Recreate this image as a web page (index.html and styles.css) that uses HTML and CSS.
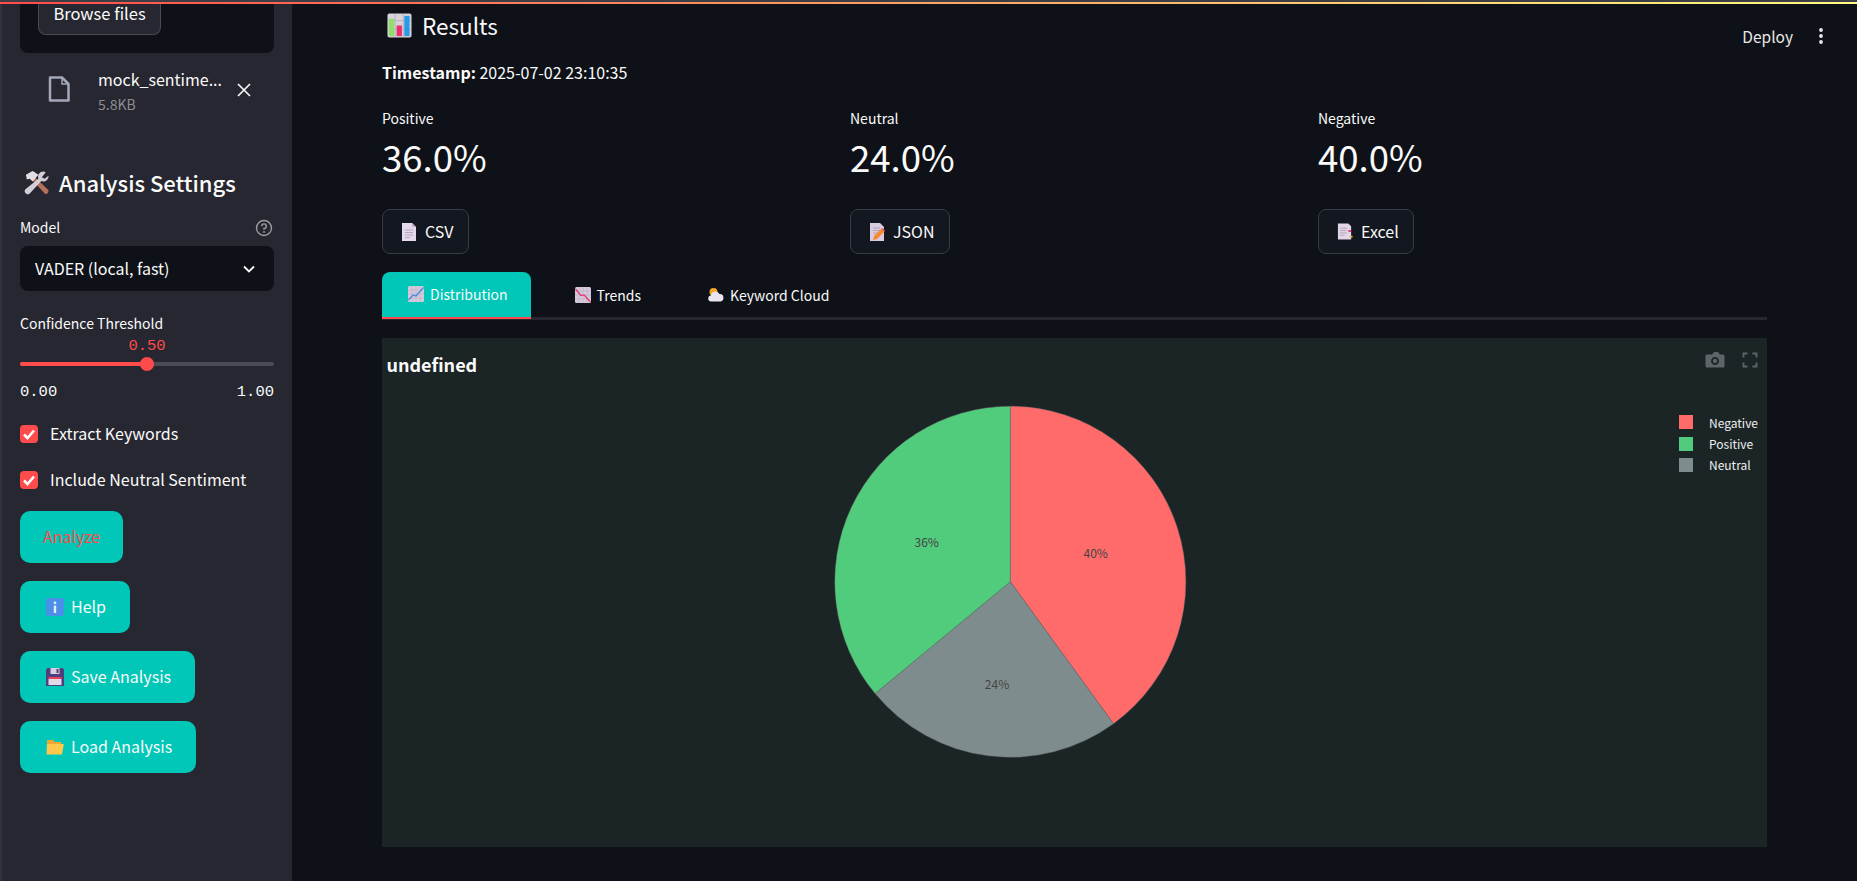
FILE: index.html
```html
<!DOCTYPE html>
<html lang="en">
<head>
  <meta charset="UTF-8" />
  <meta name="viewport" content="width=device-width, initial-scale=1.0" />
  <title>Sentiment Dashboard</title>
  <link rel="stylesheet" href="styles.css">
</head>
<body>
  <svg class="icon-defs" width="0" height="0">
    <symbol id="e-tools" viewBox="0 0 26 26">
      <path d="M22 25 L8 10 L11 7 L25.500 21 Q25.500 25 22 25Z" fill="#b5705a"/>
      <path d="M2 5 L9 1 L15 5 L9 12 L6 9 L3 10Z" fill="#e4dfe6"/>
      <path d="M20 1.500 A5.500 5.500 0 0 0 15 9 L1.500 20 A3.200 3.200 0 0 0 6 24.500 L18 11.500 A5.500 5.500 0 0 0 25.500 6 L21.500 9 L18.500 7.500 L22.500 2.500 Q21.500 1.500 20 1.500Z" fill="#d2cfd8"/>
    </symbol>
    <symbol id="e-chart" viewBox="0 0 26 26">
      <rect x="0.500" y="0.500" width="25" height="25" rx="2" fill="#d8d2da"/>
      <path d="M8.500 1V25M17 1V25M1 8H25M1 17H25" stroke="#b9b3bc" stroke-width="1"/>
      <rect x="2" y="6" width="5.500" height="18" fill="#8fe06a"/>
      <rect x="10" y="13" width="5.500" height="11" fill="#e8316e"/>
      <rect x="18" y="3" width="5.500" height="21" fill="#2a9ae8"/>
    </symbol>
    <symbol id="e-page" viewBox="0 0 16 20">
      <path d="M1 1H11L15 5V19H1Z" fill="#e6d8ec"/>
      <path d="M11 1L15 5H11Z" fill="#bfb0c8"/>
      <path d="M4 8H12M4 10.500H12M4 13H12M4 15.500H9" stroke="#a99bb0" stroke-width="0.800"/>
    </symbol>
    <symbol id="e-memo" viewBox="0 0 16 20">
      <path d="M1 1H11L15 5V19H1Z" fill="#d9cbe0"/>
      <path d="M4 6H11M4 8.500H12M4 11H9" stroke="#a99bb0" stroke-width="0.800"/>
      <path d="M4 18L5 14L12 7L15 10L8 17Z" fill="#f58a2e"/>
      <path d="M12 7L14 6L16 9L15 10Z" fill="#f0584e"/>
    </symbol>
    <symbol id="e-tabs" viewBox="0 0 17 20">
      <path d="M1 1H12L15 4V18H1Z" fill="#e2d6e8"/>
      <path d="M3 6H11M3 8.500H10M3 11H11M3 13.500H8" stroke="#a99bb0" stroke-width="0.800"/>
      <rect x="12" y="8" width="3" height="2" fill="#e8406a"/>
      <rect x="14" y="14" width="2.500" height="2" fill="#f2a93b"/>
    </symbol>
    <symbol id="e-up" viewBox="0 0 16 16">
      <rect width="16" height="16" rx="1.500" fill="#d5c9dc"/>
      <path d="M4 0V16M8 0V16M12 0V16M0 4H16M0 8H16M0 12H16" stroke="#b8abc1" stroke-width="0.500"/>
      <path d="M0.500 14L5 9L8 10L15.500 1.500" fill="none" stroke="#3f8be0" stroke-width="1.200"/>
    </symbol>
    <symbol id="e-down" viewBox="0 0 16 16">
      <rect width="16" height="16" rx="1.500" fill="#d5c9dc"/>
      <path d="M4 0V16M8 0V16M12 0V16M0 4H16M0 8H16M0 12H16" stroke="#b8abc1" stroke-width="0.500"/>
      <path d="M0.500 2L6 8.500L9 8L15.500 15" fill="none" stroke="#e8356e" stroke-width="1.200"/>
    </symbol>
    <symbol id="e-cloud" viewBox="0 0 16 16">
      <circle cx="5.500" cy="5" r="4" fill="#f5a623"/>
      <path d="M3.500 14.500A3 3 0 0 1 3 8.500A4.500 4.500 0 0 1 11.500 7A3.800 3.800 0 0 1 12.500 14.500Z" fill="#e9e6f2"/>
    </symbol>
    <symbol id="e-info" viewBox="0 0 18 18">
      <rect width="18" height="18" rx="2.500" fill="#4a8fe8"/>
      <rect x="7.800" y="7.500" width="2.400" height="7.500" fill="#e4ecfb"/>
      <circle cx="9" cy="4.800" r="1.400" fill="#e4ecfb"/>
    </symbol>
    <symbol id="e-floppy" viewBox="0 0 18 18">
      <path d="M1.500 0H16.500L18 1.500V18H0V1.500Z" fill="#4f3f7e"/>
      <rect x="4.500" y="0" width="9" height="6" fill="#d6d0e2"/>
      <rect x="10.500" y="1" width="2" height="4" fill="#4f3f7e"/>
      <rect x="2.500" y="9" width="13" height="2" fill="#e8405a"/>
      <rect x="2.500" y="11" width="13" height="6" fill="#e2d8ea"/>
    </symbol>
    <symbol id="e-folder" viewBox="0 0 18 16">
      <path d="M1 1H7L9 3H15V7H1Z" fill="#f0a92e"/>
      <path d="M0.500 15.500L1 5H17.800L16 15.500Z" fill="#ffc84a"/>
    </symbol>
  </svg>

  <div class="top-line"></div>

  <aside class="sidebar">
    <div class="uploader">
      <button class="browse-btn">Browse files</button>
    </div>

    <div class="file-row">
      <svg class="file-icon" viewBox="0 0 22 26"><path d="M2 1.500H14L20.500 8V24.500H2Z" fill="none" stroke="#a3a8b8" stroke-width="2.500" stroke-linejoin="round"/><path d="M14 1.500V8H20.500" fill="none" stroke="#a3a8b8" stroke-width="1.500"/></svg>
      <div class="file-text">
        <div class="file-name">mock_sentime...</div>
        <div class="file-size">5.8KB</div>
      </div>
      <svg class="file-close" viewBox="0 0 14 14"><path d="M1 1L13 13M13 1L1 13" stroke="#fafafa" stroke-width="1.600"/></svg>
    </div>

    <h3 class="side-title"><svg class="emoji-lg"><use href="#e-tools"/></svg>Analysis Settings</h3>

    <div class="field-label">
      <span>Model</span>
      <svg class="help-icon" viewBox="0 0 18 18"><circle cx="9" cy="9" r="7.500" fill="none" stroke="#9a9ba2" stroke-width="1.400"/><path d="M6.700 7.200A2.300 2.300 0 1 1 9 9.500V10.700" fill="none" stroke="#9a9ba2" stroke-width="1.400"/><circle cx="9" cy="13" r="0.900" fill="#9a9ba2"/></svg>
    </div>
    <div class="select-box">
      <span>VADER (local, fast)</span>
      <svg class="chevron" viewBox="0 0 12 8"><path d="M1 1.500L6 6.500L11 1.500" fill="none" stroke="#fafafa" stroke-width="1.800"/></svg>
    </div>

    <div class="slider-label">Confidence Threshold</div>
    <div class="slider-value">0.50</div>
    <div class="slider-track"><div class="slider-fill"></div><div class="slider-thumb"></div></div>
    <div class="slider-ticks"><span>0.00</span><span>1.00</span></div>

    <label class="check-row"><span class="check-box"><svg viewBox="0 0 18 18"><path d="M4 9.500L7.500 13L14 5.500" fill="none" stroke="#fff" stroke-width="2.600"/></svg></span>Extract Keywords</label>
    <label class="check-row"><span class="check-box"><svg viewBox="0 0 18 18"><path d="M4 9.500L7.500 13L14 5.500" fill="none" stroke="#fff" stroke-width="2.600"/></svg></span>Include Neutral Sentiment</label>

    <div class="side-buttons">
      <button class="teal-btn analyze">Analyze</button>
      <button class="teal-btn"><svg class="emoji-btn"><use href="#e-info"/></svg>Help</button>
      <button class="teal-btn"><svg class="emoji-btn"><use href="#e-floppy"/></svg>Save Analysis</button>
      <button class="teal-btn"><svg class="emoji-btn"><use href="#e-folder"/></svg>Load Analysis</button>
    </div>
  </aside>

  <main class="main">
    <div class="app-header">
      <span>Deploy</span>
      <svg class="kebab" viewBox="0 0 6 18"><circle cx="3" cy="3" r="1.900"/><circle cx="3" cy="9" r="1.900"/><circle cx="3" cy="15" r="1.900"/></svg>
    </div>

    <h3 class="results-title"><svg class="emoji-lg"><use href="#e-chart"/></svg>Results</h3>
    <p class="timestamp"><strong>Timestamp:</strong> 2025-07-02 23:10:35</p>

    <div class="metrics">
      <div class="metric">
        <div class="metric-label">Positive</div>
        <div class="metric-value">36.0%</div>
        <button class="dl-btn"><svg class="emoji-dl"><use href="#e-page"/></svg>CSV</button>
      </div>
      <div class="metric">
        <div class="metric-label">Neutral</div>
        <div class="metric-value">24.0%</div>
        <button class="dl-btn"><svg class="emoji-dl"><use href="#e-memo"/></svg>JSON</button>
      </div>
      <div class="metric">
        <div class="metric-label">Negative</div>
        <div class="metric-value">40.0%</div>
        <button class="dl-btn"><svg class="emoji-dl"><use href="#e-tabs"/></svg>Excel</button>
      </div>
    </div>

    <div class="tabs">
      <div class="tab active"><svg class="emoji-tab"><use href="#e-up"/></svg>Distribution</div>
      <div class="tab"><svg class="emoji-tab"><use href="#e-down"/></svg>Trends</div>
      <div class="tab"><svg class="emoji-tab"><use href="#e-cloud"/></svg>Keyword Cloud</div>
    </div>

    <svg class="chart" viewBox="0 0 1385 509" width="1385" height="509">
      <rect width="1385" height="509" fill="#1c2526"/>
      <text class="chart-title" x="4.500" y="34">undefined</text>

      <path d="M628.300 243.700V68.200A175.500 175.500 0 0 1 731.500 385.700Z" fill="#ff6b6b" stroke="#666" stroke-width="0.400"/>
      <path d="M628.300 243.700L731.500 385.700A175.500 175.500 0 0 1 493.100 355.600Z" fill="#7f8c8d" stroke="#666" stroke-width="0.400"/>
      <path d="M628.300 243.700L493.100 355.600A175.500 175.500 0 0 1 628.300 68.200Z" fill="#51cb7c" stroke="#666" stroke-width="0.400"/>
      <text class="pie-label" x="713.700" y="220">40%</text>
      <text class="pie-label" x="544.700" y="209">36%</text>
      <text class="pie-label" x="615" y="350.500">24%</text>

      <rect x="1297" y="77" width="14" height="14" fill="#ff6b6b"/>
      <rect x="1297" y="99" width="14" height="14" fill="#51cb7c"/>
      <rect x="1297" y="120" width="14" height="14" fill="#7f8c8d"/>
      <text class="legend-label" x="1327" y="90">Negative</text>
      <text class="legend-label" x="1327" y="111">Positive</text>
      <text class="legend-label" x="1327" y="132">Neutral</text>

      <path d="M1330 16.500L1332 14H1336L1338 16.500H1341A1.500 1.500 0 0 1 1342.500 18V28A1.500 1.500 0 0 1 1341 29.500H1325A1.500 1.500 0 0 1 1323.500 28V18A1.500 1.500 0 0 1 1325 16.500Z M1333 19A4 4 0 1 0 1333.010 19Z M1333 20.800A2.200 2.200 0 1 1 1332.990 20.800Z" fill="#5d6568" fill-rule="evenodd"/>
      <path d="M1361.500 19.500V15.500H1365.500M1370.500 15.500H1374.500V19.500M1374.500 24.500V28.500H1370.500M1365.500 28.500H1361.500V24.500" fill="none" stroke="#5d6568" stroke-width="1.800"/>
    </svg>
  </main>
</body>
</html>
```

FILE: styles.css
```css
* {
  box-sizing: border-box;
}

body {
  margin: 0;
  height: 100vh;
  display: flex;
  overflow: hidden;
  background: #0e1117;
  color: #fafafa;
  font-family: "Noto Sans CJK SC", "Noto Sans", sans-serif;
}

button {
  font-family: inherit;
  color: inherit;
}

.icon-defs {
  position: absolute;
}

.top-line {
  position: absolute;
  top: 0;
  left: 0;
  right: 0;
  height: 4px;
  border-top: 2px solid #3d3e45;
  background: linear-gradient(to right, #ff4b4b, #fffd80);
}

/* sidebar */
.sidebar {
  width: 292px;
  flex-shrink: 0;
  height: 100%;
  padding: 0 18px 0 18px;
  background: #262730;
  border-left: 2px solid #31323b;
  overflow: hidden;
}

.uploader {
  height: 53px;
  padding-left: 18px;
  background: #0e1117;
  border-radius: 0 0 8px 8px;
}

.browse-btn {
  display: block;
  width: 123px;
  height: 35px;
  padding: 0 0 8px;
  background: #262730;
  border: 1px solid #4a4b55;
  border-top: none;
  border-radius: 0 0 8px 8px;
  font-size: 16.500px;
}

.file-row {
  display: flex;
  align-items: center;
  height: 64px;
  padding: 7px 0 0 28px;
}

.file-icon {
  width: 22px;
  height: 26px;
}

.file-text {
  margin-left: 28px;
  width: 139px;
  margin-top: 4px;
}

.file-name {
  font-size: 16px;
  line-height: 26px;
}

.file-size {
  font-size: 14px;
  line-height: 24px;
  color: #8c8d94;
}

.file-close {
  width: 14px;
  height: 14px;
  margin-top: 2px;
}

.side-title {
  display: flex;
  align-items: center;
  margin: 49px 0 0;
  height: 32px;
  padding-left: 4px;
  font-size: 22px;
  font-weight: 500;
}

.emoji-lg {
  width: 25px;
  height: 25px;
  margin-right: 10px;
}

.field-label {
  display: flex;
  justify-content: space-between;
  align-items: center;
  height: 20px;
  margin-top: 19px;
  font-size: 14px;
}

.help-icon {
  width: 18px;
  height: 18px;
  margin: 1px 1px 0 0;
}

.select-box {
  display: flex;
  justify-content: space-between;
  align-items: center;
  height: 45px;
  margin-top: 9px;
  padding: 0 19px 2px 15px;
  background: #0e1117;
  border-radius: 8px;
  font-size: 16px;
}

.chevron {
  width: 12px;
  height: 8px;
  margin-top: 2px;
}

.slider-label {
  margin-top: 22px;
  font-size: 14px;
  line-height: 20px;
}

.slider-value {
  margin-top: 3px;
  text-align: center;
  font-family: "Liberation Mono", monospace;
  font-size: 15.500px;
  line-height: 20px;
  color: #ff4b4b;
}

.slider-track {
  position: relative;
  height: 4px;
  margin-top: 6px;
  background: #4a4b55;
  border-radius: 2px;
}

.slider-fill {
  width: 50%;
  height: 100%;
  background: #ff4b4b;
  border-radius: 2px;
}

.slider-thumb {
  position: absolute;
  top: -5px;
  left: 120px;
  width: 14px;
  height: 14px;
  background: #ff4b4b;
  border-radius: 50%;
}

.slider-ticks {
  display: flex;
  justify-content: space-between;
  margin-top: 16px;
  font-family: "Liberation Mono", monospace;
  font-size: 15.500px;
  line-height: 20px;
}

.check-row {
  display: flex;
  align-items: center;
  height: 24px;
  padding-bottom: 2px;
  font-size: 16px;
}

.slider-ticks + .check-row {
  margin-top: 20px;
}

.check-row + .check-row {
  margin-top: 22px;
}

.check-box {
  width: 18px;
  height: 18px;
  margin: 2px 12px 0 0;
  background: #ff4b4b;
  border-radius: 4px;
}

.check-box svg {
  display: block;
}

.side-buttons {
  display: flex;
  flex-direction: column;
  align-items: flex-start;
  gap: 18px;
  margin-top: 19px;
}

.teal-btn {
  display: flex;
  align-items: center;
  height: 52px;
  padding: 0 24px 2px 26px;
  background: #00c7b7;
  border: none;
  border-radius: 10px;
  font-size: 16px;
}

.teal-btn.analyze {
  padding: 0 23px 2px;
  color: #ff4b4b;
}

.emoji-btn {
  width: 18px;
  height: 18px;
  margin: 2px 7px 0 0;
}

/* main area */
.main {
  position: relative;
  flex: 1;
  padding: 0 90px;
  min-width: 0;
}

.app-header {
  position: absolute;
  top: 26px;
  right: 33px;
  display: flex;
  align-items: center;
  gap: 25px;
  height: 20px;
  font-size: 15.500px;
  color: #e8e8e8;
}

.kebab {
  width: 6px;
  height: 18px;
  fill: #e8e8e8;
}

.results-title {
  display: flex;
  align-items: center;
  height: 32px;
  margin: 9px 0 0;
  padding-left: 5px;
  font-size: 22.500px;
  font-weight: 400;
}

.timestamp {
  margin: 18px 0 0;
  font-size: 16px;
  line-height: 26px;
}

.timestamp strong {
  font-weight: 700;
}

.metrics {
  display: grid;
  grid-template-columns: repeat(3, 1fr);
  gap: 19px;
  margin-top: 23px;
}

.metric {
  display: flex;
  flex-direction: column;
  align-items: flex-start;
}

.metric-label {
  font-size: 14px;
  line-height: 20px;
}

.metric-value {
  margin-top: 3px;
  font-size: 36.600px;
  line-height: 52px;
  font-weight: 400;
}

.dl-btn {
  display: flex;
  align-items: center;
  height: 45px;
  margin-top: 26px;
  padding: 0 14px 2px 18px;
  background: #13171f;
  border: 1px solid #3a3c45;
  border-radius: 8px;
  font-size: 16px;
}

.emoji-dl {
  width: 16px;
  height: 20px;
  margin: 2px 8px 0 0;
}

.tabs {
  display: flex;
  gap: 18px;
  height: 48px;
  margin-top: 18px;
  border-bottom: 3px solid #262730;
}

.tab {
  display: flex;
  align-items: center;
  height: 47px;
  padding: 0 23px 2px 26px;
  font-size: 14px;
}

.tab.active {
  background: #00c7b7;
  border-radius: 8px 8px 0 0;
  border-bottom: 2px solid #ff4b4b;
}

.emoji-tab {
  width: 16px;
  height: 16px;
  margin-right: 6px;
}

.chart {
  display: block;
  margin-top: 18px;
}

.chart text {
  font-family: "Noto Sans CJK SC", "Noto Sans", sans-serif;
}

.chart-title {
  font-size: 18px;
  font-weight: 700;
  fill: #fafafa;
}

.pie-label {
  font-size: 12px;
  fill: #444;
  text-anchor: middle;
}

.legend-label {
  font-size: 12px;
  fill: #eee;
}
```
